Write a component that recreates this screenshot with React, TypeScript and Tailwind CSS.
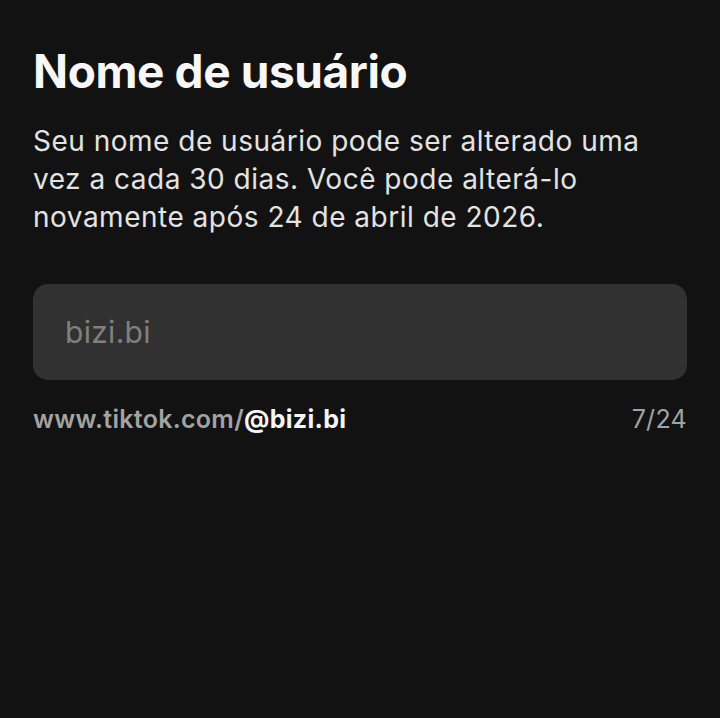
export default function App() {
  return (
    <div className="min-h-[718px] w-full bg-[#121212] px-[33px] pt-[45px] font-['Inter',sans-serif]">
      <h1 className="text-[46px] leading-[52px] font-bold tracking-[-0.4px] text-[#f7f7f7]">
        Nome de usuário
      </h1>
      <p className="mt-[25px] text-[28px] leading-[38px] tracking-[0.5px] text-[#e3e3e3]">
        Seu nome de usuário pode ser alterado uma vez a cada 30 dias. Você pode alterá-lo
        novamente após 24 de abril de 2026.
      </p>

      <div className="mt-[48px] flex h-[96px] items-center rounded-[15px] bg-[#313131] px-[32px]">
        <span className="text-[30px] tracking-[0.3px] text-[#808080]">bizi.bi</span>
      </div>

      <div className="mt-[24px] flex items-baseline justify-between text-[25px] leading-[30px] tracking-[0.3px]">
        <span className="font-semibold text-[#a3a3a3]">
          www.tiktok.com/<span className="font-bold text-[#f5f5f5]">@bizi.bi</span>
        </span>
        <span className="text-[#a3a3a3]">7/24</span>
      </div>
    </div>
  )
}
